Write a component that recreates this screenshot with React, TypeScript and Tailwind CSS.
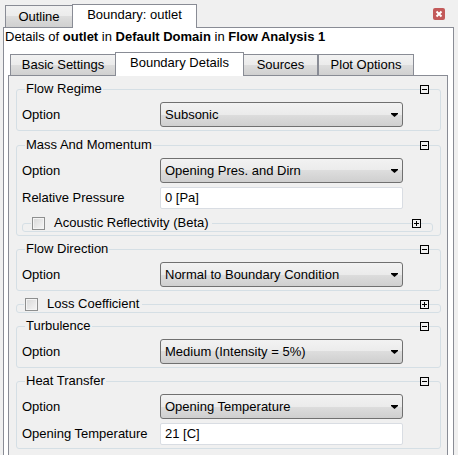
import React from "react";

const Tab = ({
  label,
  active,
  className,
}: {
  label: string;
  active?: boolean;
  className: string;
}) => (
  <div
    className={
      active
        ? `relative z-10 -mb-px flex items-center justify-center border border-b-0 border-[#898c95] bg-white pb-[3px] ${className}`
        : `flex items-center justify-center border border-b-0 border-[#898c95] bg-[linear-gradient(#f2f2f2,#ebebeb_50%,#dddddd_50%,#d0d0d0)] ${className}`
    }
  >
    {label}
  </div>
);

const BoxIcon = ({ plus }: { plus?: boolean }) => (
  <svg width="9" height="9" viewBox="0 0 9 9" className="block bg-[#f0f0f0]">
    <rect x="0.5" y="0.5" width="8" height="8" fill="#f0f0f0" stroke="#000" />
    <path d="M2 4.5h5" stroke="#000" />
    {plus && <path d="M4.5 2v5" stroke="#000" />}
  </svg>
);

const Checkbox = () => (
  <div className="h-[13px] w-[13px] border border-[#8e8f8f] bg-[linear-gradient(135deg,#d8d8d8,#f6f6f6)] shadow-[inset_0_0_0_1px_#f4f4f4]" />
);

const Select = ({ value }: { value: string }) => (
  <div className="flex h-[25px] w-[243px] items-center justify-between rounded-[3px] border border-[#707070] bg-[linear-gradient(#f2f2f2,#ebebeb_50%,#dddddd_50%,#cfcfcf)] pl-[4px] pr-[4px]">
    <span>{value}</span>
    <svg width="7" height="4" viewBox="0 0 7 4">
      <path d="M0 0h7v1L3.5 4 0 1z" fill="#000" />
    </svg>
  </div>
);

const Input = ({ value }: { value: string }) => (
  <div className="flex h-[22px] w-[243px] items-center rounded-[2px] border border-[#d9dde3] bg-white pl-[4px]">
    {value}
  </div>
);

const Row = ({ label, children }: { label: string; children: React.ReactNode }) => (
  <div className="flex items-center">
    <div className="w-[138px]">{label}</div>
    {children}
  </div>
);

const Group = ({ title, children }: { title: string; children: React.ReactNode }) => (
  <div className="relative">
    <fieldset className="rounded-[3px] border border-[#d5dfe5] px-[5px] pb-[3px]">
      <legend className="ml-[3px] px-[1px] leading-4">{title}</legend>
      <div className="flex flex-col gap-[4px] pt-[5px]">{children}</div>
    </fieldset>
    <div className="absolute right-[12px] top-[4px]">
      <BoxIcon />
    </div>
  </div>
);

const CheckGroup = ({ label, inset }: { label: string; inset?: boolean }) => (
  <div className={inset ? "relative mt-[2px] w-[411px]" : "relative"}>
    <fieldset className="rounded-[3px] border border-[#d5dfe5]">
      <legend
        className={
          inset
            ? "ml-[8px] flex items-center gap-[9px] px-[1px] leading-4"
            : "ml-[7px] flex items-center gap-[9px] px-[1px] leading-4"
        }
      >
        <Checkbox />
        <span className="pr-[2px]">{label}</span>
      </legend>
    </fieldset>
    <div className="absolute right-[12px] top-[4px]">
      <BoxIcon plus />
    </div>
  </div>
);

export default function App() {
  return (
    <div className="h-[455px] w-[458px] overflow-hidden bg-[#f0f0f0] font-['Liberation_Sans',Arial,sans-serif] text-[13px] leading-4 text-black">
      <div className="flex h-[27px] items-end pl-[5px]">
        <Tab label="Outline" className="h-[22px] w-[68px]" />
        <Tab active label="Boundary: outlet" className="-ml-px h-[24px] w-[125px]" />
        <svg width="12" height="12" viewBox="0 0 12 12" className="mr-[13px] ml-auto mt-[8px] self-start">
          <rect width="12" height="12" rx="2" fill="#c35a5a" />
          <path d="M3.5 3.5l5 5M8.5 3.5l-5 5" stroke="#fff" strokeWidth="2" />
        </svg>
      </div>
      <div className="ml-[3px] h-[440px] w-[451px] border border-[#898c95] bg-white">
        <div className="h-[18px] pl-[1px] pt-[1px]">
          Details of <b>outlet</b> in <b>Default Domain</b> in <b>Flow Analysis 1</b>
        </div>
        <div className="flex h-[29px] items-end pl-[6px]">
          <Tab label="Basic Settings" className="h-[21px] w-[106px]" />
          <Tab active label="Boundary Details" className="-ml-px h-[24px] w-[129px]" />
          <Tab label="Sources" className="-ml-px h-[21px] w-[75px]" />
          <Tab label="Plot Options" className="h-[21px] w-[96px]" />
        </div>
        <div className="ml-[4px] flex h-[400px] w-[440px] flex-col gap-[5px] border border-[#898c95] bg-[#f0f0f0] pl-[7px] pr-[6px] pt-[5px]">
          <div className="mb-[1px]">
            <Group title="Flow Regime">
              <Row label="Option">
                <Select value="Subsonic" />
              </Row>
            </Group>
          </div>
          <Group title="Mass And Momentum">
            <Row label="Option">
              <Select value="Opening Pres. and Dirn" />
            </Row>
            <Row label="Relative Pressure">
              <Input value="0 [Pa]" />
            </Row>
            <CheckGroup inset label="Acoustic Reflectivity (Beta)" />
          </Group>
          <Group title="Flow Direction">
            <Row label="Option">
              <Select value="Normal to Boundary Condition" />
            </Row>
          </Group>
          <CheckGroup label="Loss Coefficient" />
          <Group title="Turbulence">
            <Row label="Option">
              <Select value="Medium (Intensity = 5%)" />
            </Row>
          </Group>
          <Group title="Heat Transfer">
            <Row label="Option">
              <Select value="Opening Temperature" />
            </Row>
            <Row label="Opening Temperature">
              <Input value="21 [C]" />
            </Row>
          </Group>
        </div>
      </div>
    </div>
  );
}
